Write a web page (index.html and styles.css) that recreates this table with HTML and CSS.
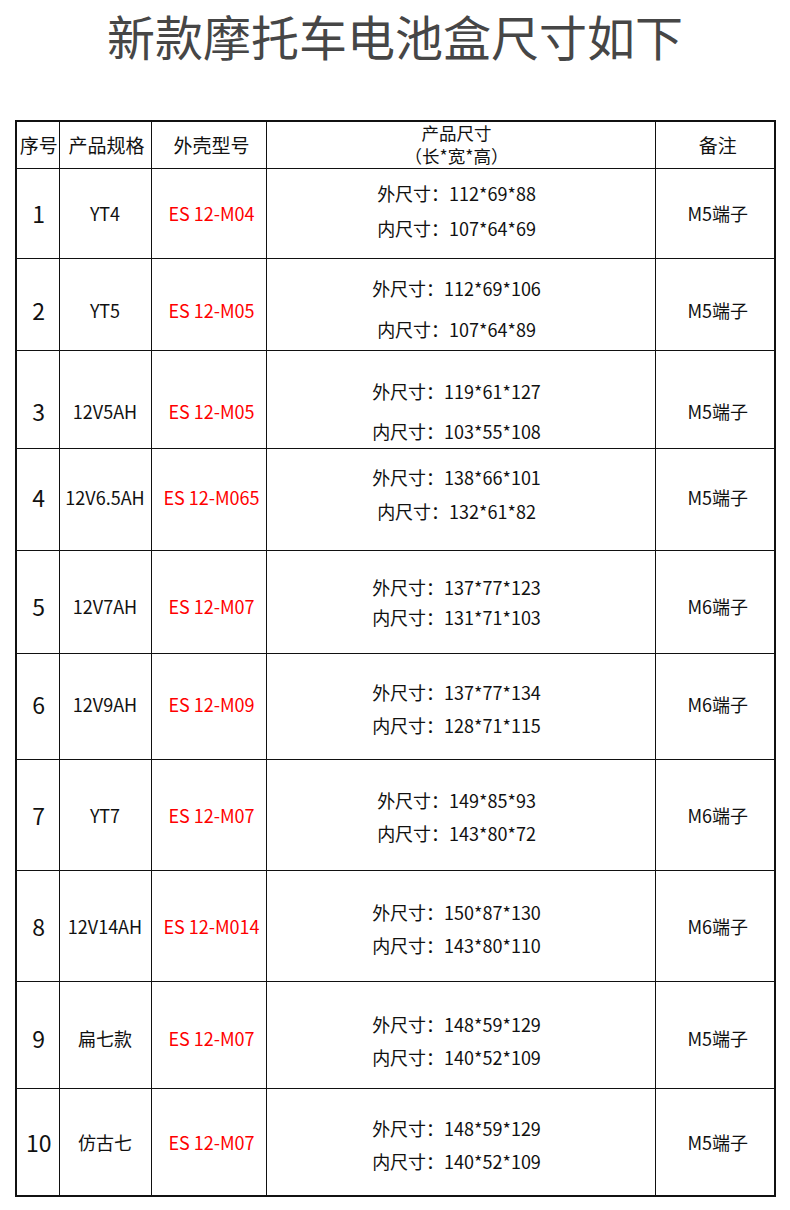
FILE: index.html
```html
<!DOCTYPE html>
<html lang="zh">
<head>
<meta charset="utf-8">
<title>新款摩托车电池盒尺寸如下</title>
<link rel="stylesheet" href="styles.css">
</head>
<body>
<h1 class="title">新款摩托车电池盒尺寸如下</h1>
<table class="spec">
  <colgroup>
    <col class="c-no"><col class="c-spec"><col class="c-model"><col class="c-size"><col class="c-note">
  </colgroup>
  <thead>
    <tr class="r-head">
      <th class="no-h">序号</th><th class="kind-h">产品规格</th><th>外壳型号</th>
      <th class="size"><div class="size-head"><span>产品尺寸</span><span>（长*宽*高）</span></div></th>
      <th>备注</th>
    </tr>
  </thead>
  <tbody>
    <tr class="r1">
      <td class="no">1</td><td class="kind">YT4</td><td class="model">ES 12-M04</td>
      <td class="size"><div class="dims g35 up3"><span>外尺寸：112*69*88</span><span>内尺寸：107*64*69</span></div></td>
      <td>M5端子</td>
    </tr>
    <tr class="r2">
      <td class="no">2</td><td class="kind">YT5</td><td class="model">ES 12-M05</td>
      <td class="size"><div class="dims g41 up2"><span>外尺寸：112*69*106</span><span>内尺寸：107*64*89</span></div></td>
      <td>M5端子</td>
    </tr>
    <tr class="r3">
      <td class="no">3</td><td class="kind">12V5AH</td><td class="model">ES 12-M05</td>
      <td class="size"><div class="dims g40"><span>外尺寸：119*61*127</span><span>内尺寸：103*55*108</span></div></td>
      <td>M5端子</td>
    </tr>
    <tr class="r4">
      <td class="no">4</td><td class="kind">12V6.5AH</td><td class="model">ES 12-M065</td>
      <td class="size"><div class="dims g34 up3"><span>外尺寸：138*66*101</span><span>内尺寸：132*61*82</span></div></td>
      <td>M5端子</td>
    </tr>
    <tr class="r5">
      <td class="no">5</td><td class="kind">12V7AH</td><td class="model">ES 12-M07</td>
      <td class="size"><div class="dims g30 up4"><span>外尺寸：137*77*123</span><span>内尺寸：131*71*103</span></div></td>
      <td>M6端子</td>
    </tr>
    <tr class="r6">
      <td class="no">6</td><td class="kind">12V9AH</td><td class="model">ES 12-M09</td>
      <td class="size"><div class="dims g33 down4"><span>外尺寸：137*77*134</span><span>内尺寸：128*71*115</span></div></td>
      <td>M6端子</td>
    </tr>
    <tr class="r7">
      <td class="no">7</td><td class="kind">YT7</td><td class="model">ES 12-M07</td>
      <td class="size"><div class="dims g33 down2"><span>外尺寸：149*85*93</span><span>内尺寸：143*80*72</span></div></td>
      <td>M6端子</td>
    </tr>
    <tr class="r8">
      <td class="no">8</td><td class="kind">12V14AH</td><td class="model">ES 12-M014</td>
      <td class="size"><div class="dims g33 down3"><span>外尺寸：150*87*130</span><span>内尺寸：143*80*110</span></div></td>
      <td>M6端子</td>
    </tr>
    <tr class="r9">
      <td class="no">9</td><td class="kind">扁七款</td><td class="model">ES 12-M07</td>
      <td class="size"><div class="dims g33 down3"><span>外尺寸：148*59*129</span><span>内尺寸：140*52*109</span></div></td>
      <td>M5端子</td>
    </tr>
    <tr class="r10">
      <td class="no">10</td><td class="kind">仿古七</td><td class="model">ES 12-M07</td>
      <td class="size"><div class="dims g33 down3"><span>外尺寸：148*59*129</span><span>内尺寸：140*52*109</span></div></td>
      <td>M5端子</td>
    </tr>
  </tbody>
</table>
</body>
</html>
```

FILE: styles.css
```css
html, body {
  margin: 0;
  padding: 0;
  background: #fff;
}
body {
  font-family: "Noto Sans CJK SC", "Noto Sans", sans-serif;
  color: #111;
}
.title {
  margin: 0 0 50px 0;
  height: 70px;
  line-height: 70px;
  font-size: 48px;
  font-weight: 400;
  color: #464646;
  text-align: center;
}
.spec {
  margin-left: 15px;
  width: 759px;
  border-collapse: collapse;
  table-layout: fixed;
  border: 2px solid #111;
}
.c-no { width: 43px; }
.c-spec { width: 92px; }
.c-model { width: 115px; }
.c-size { width: 389px; }
.c-note { width: 120px; }
.spec th, .spec td {
  border: 1px solid #111;
  padding: 0 0 0 6px;
  text-align: center;
  vertical-align: middle;
  font-size: 18px;
  font-weight: 400;
  line-height: 22px;
  white-space: nowrap;
}
.spec th {
  font-size: 19px;
}
.spec .kind {
  padding-left: 0;
}
.spec .kind-h {
  padding-left: 3px;
}
.spec .size {
  padding-left: 0;
  padding-right: 8px;
}
.spec .no, .spec .no-h {
  padding-left: 2px;
}
.size-head {
  display: flex;
  flex-direction: column;
  align-items: center;
  font-size: 17.5px;
  line-height: 23px;
  margin-top: -2px;
}
.spec td.no {
  font-size: 23px;
}
.spec td.model {
  color: #ff0000;
}
.dims {
  display: flex;
  flex-direction: column;
  align-items: center;
}
.g30 { gap: 8px; }
.g33 { gap: 11px; }
.g34 { gap: 12px; }
.g35 { gap: 13px; }
.g40 { gap: 18px; }
.g41 { gap: 19px; }
.up2 { margin-bottom: 4px; }
.up3 { margin-bottom: 6px; }
.up4 { margin-bottom: 8px; }
.down2 { margin-top: 4px; }
.down3 { margin-top: 6px; }
.down4 { margin-top: 8px; }
.r-head { height: 47px; }
.r1 { height: 90px; }
.r2 { height: 92px; }
.r3 { height: 98px; }
.r4 { height: 102px; }
.r5 { height: 103px; }
.r6 { height: 106px; }
.r7 { height: 111px; }
.r8 { height: 111px; }
.r9 { height: 107px; }
.r10 { height: 108px; }
.r2 td { padding-top: 12px; }
.r3 td { padding-top: 24px; }
.r5 td { padding-top: 8px; }
.r9 td { padding-top: 6px; }
.r4 td, .r6 td { padding-bottom: 4px; }
```
